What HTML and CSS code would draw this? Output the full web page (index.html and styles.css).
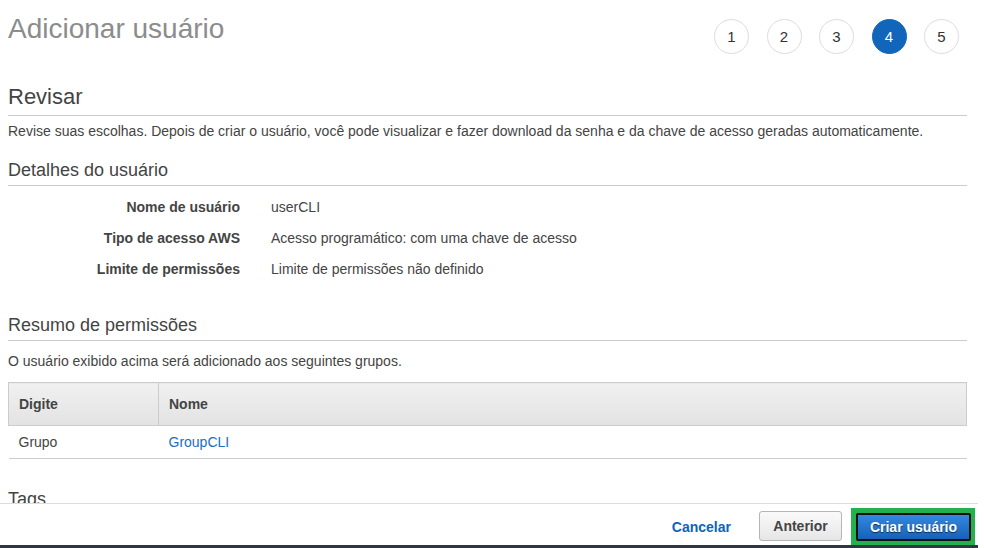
FILE: index.html
```html
<!DOCTYPE html>
<html lang="pt">
<head>
<meta charset="utf-8">
<title>Adicionar usuário</title>
<link rel="stylesheet" href="styles.css">
</head>
<body>
<div class="page">
  <main class="content">
    <header class="top">
      <h1 class="title">Adicionar usuário</h1>
      <ol class="steps">
        <li class="step">1</li>
        <li class="step">2</li>
        <li class="step">3</li>
        <li class="step step-active">4</li>
        <li class="step">5</li>
      </ol>
    </header>

    <h2 class="section-title section-main">Revisar</h2>
    <p class="text text-desc">Revise suas escolhas. Depois de criar o usuário, você pode visualizar e fazer download da senha e da chave de acesso geradas automaticamente.</p>

    <h3 class="section-title section-sub section-details">Detalhes do usuário</h3>
    <dl class="details">
      <dt class="details-label">Nome de usuário</dt>
      <dd class="details-value">userCLI</dd>
      <dt class="details-label">Tipo de acesso AWS</dt>
      <dd class="details-value">Acesso programático: com uma chave de acesso</dd>
      <dt class="details-label">Limite de permissões</dt>
      <dd class="details-value">Limite de permissões não definido</dd>
    </dl>

    <h3 class="section-title section-sub section-perm">Resumo de permissões</h3>
    <p class="text text-perm">O usuário exibido acima será adicionado aos seguintes grupos.</p>

    <table class="grid">
      <thead>
        <tr>
          <th class="grid-head grid-col1">Digite</th>
          <th class="grid-head grid-col2">Nome</th>
        </tr>
      </thead>
      <tbody>
        <tr>
          <td class="grid-cell">Grupo</td>
          <td class="grid-cell"><a class="link" href="#">GroupCLI</a></td>
        </tr>
      </tbody>
    </table>

    <h3 class="section-title section-sub section-tags">Tags</h3>
  </main>

  <footer class="footer">
    <div class="footer-inner">
      <a class="btn-link" href="#">Cancelar</a>
      <button class="btn btn-secondary" type="button">Anterior</button>
      <span class="highlight">
        <button class="btn btn-primary" type="button">Criar usuário</button>
      </span>
    </div>
  </footer>
</div>
</body>
</html>
```

FILE: styles.css
```css
* { box-sizing: border-box; }

html, body {
  margin: 0;
  padding: 0;
  background: #ffffff;
}

body {
  font-family: "Liberation Sans", Arial, sans-serif;
  color: #444444;
  font-size: 14px;
  overflow: hidden;
}

.page {
  width: 978px;
  height: 548px;
  display: flex;
  flex-direction: column;
}

.content {
  flex: 1 1 auto;
  min-height: 0;
  overflow: hidden;
  padding: 0 11px 0 8px;
}

.top {
  display: flex;
  justify-content: space-between;
  align-items: flex-start;
  height: 54px;
}

.title {
  margin: 0;
  padding-top: 12px;
  font-size: 28px;
  line-height: 34px;
  font-weight: normal;
  color: #8c8c8c;
}

.steps {
  list-style: none;
  margin: 19px 8px 0 0;
  padding: 0;
  display: flex;
  gap: 17.5px;
}

.step {
  width: 35px;
  height: 35px;
  border: 1px solid #dddddd;
  border-radius: 50%;
  display: flex;
  align-items: center;
  justify-content: center;
  font-size: 15px;
  color: #333333;
  background: #ffffff;
}

.step-active {
  background: #1166bb;
  border-color: #1166bb;
  color: #ffffff;
}

.section-title {
  margin: 0;
  font-weight: normal;
  color: #444444;
  border-bottom: 1px solid #cccccc;
}

.section-main {
  margin-top: 30px;
  font-size: 22px;
  line-height: 26px;
  padding-bottom: 5px;
}

.section-sub {
  font-size: 18px;
  line-height: 22px;
  padding-bottom: 4px;
}

.section-details { margin-top: 18px; }
.section-perm { margin-top: 35px; }
.section-tags { margin-top: 29px; border-bottom: none; }

.text {
  margin: 0;
  font-size: 14px;
  line-height: 20px;
  color: #444444;
}

.text-desc { margin-top: 5px; }
.text-perm { margin-top: 10px; }

.details {
  margin: 11px 0 0 0;
  display: grid;
  grid-template-columns: 232px auto;
  column-gap: 31px;
  row-gap: 11px;
  font-size: 14px;
  line-height: 20px;
}

.details-label {
  margin: 0;
  text-align: right;
  font-weight: bold;
  color: #444444;
}

.details-value {
  margin: 0;
  color: #444444;
}

.grid {
  margin-top: 11px;
  width: 100%;
  border-collapse: collapse;
  font-size: 14px;
}

.grid-head {
  height: 43px;
  text-align: left;
  font-weight: bold;
  color: #444444;
  padding: 0 10px;
  background: linear-gradient(#f0f0f0, #e3e3e3);
  border: 1px solid #cccccc;
}

.grid-col1 { width: 150px; }

.grid-cell {
  height: 33px;
  padding: 0 10px;
  border-bottom: 1px solid #cccccc;
  color: #444444;
}

.link {
  color: #1a6fc4;
  text-decoration: none;
}

.footer {
  flex: 0 0 45px;
  border-top: 1px solid #dddddd;
  border-bottom: 3px solid #2e3845;
  background: #ffffff;
}

.footer-inner {
  display: flex;
  justify-content: flex-end;
  align-items: flex-start;
  height: 41px;
  padding: 4px 3px 0 0;
}

.btn-link {
  margin-top: 9px;
  margin-right: 28px;
  font-size: 14px;
  line-height: 20px;
  font-weight: bold;
  color: #0b64bd;
  text-decoration: none;
}

.btn {
  font-family: "Liberation Sans", Arial, sans-serif;
  font-size: 14px;
  font-weight: bold;
  cursor: pointer;
  padding: 0;
}

.btn-secondary {
  margin-top: 3px;
  margin-right: 9px;
  width: 83px;
  height: 30px;
  border: 1px solid #b5b5b5;
  border-radius: 3px;
  background: linear-gradient(#fafafa, #e6e6e6);
  color: #444444;
}

.highlight {
  display: flex;
  width: 124px;
  height: 37px;
  padding: 5px 4px 0 5px;
  background: #22b14c;
}

.btn-primary {
  width: 115px;
  height: 28px;
  border: 2px solid #111111;
  border-radius: 2px;
  background: linear-gradient(#3388e0, #1562b8);
  color: #ffffff;
  text-shadow: 0 1px 1px rgba(0, 0, 0, 0.6);
}
```
